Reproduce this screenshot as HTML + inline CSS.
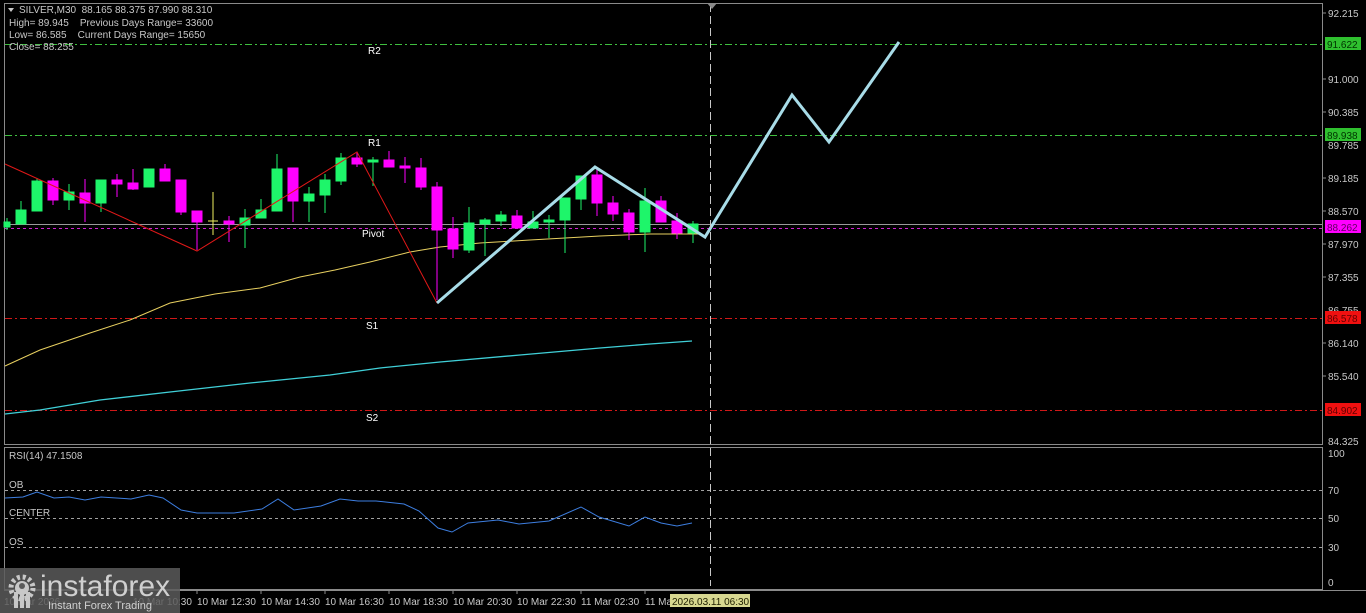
<!DOCTYPE html>
<html><head><meta charset="utf-8"><style>
html,body{margin:0;padding:0;background:#000;width:1366px;height:613px;overflow:hidden}
svg{display:block}
text{font-family:"Liberation Sans",sans-serif;font-size:10px}
</style></head><body>
<svg width="1366" height="613" viewBox="0 0 1366 613" xmlns="http://www.w3.org/2000/svg">
<rect width="1366" height="613" fill="#000"/>
<!-- frames -->
<rect x="4.5" y="3.5" width="1318" height="441" fill="none" stroke="#8a8a8a"/>
<rect x="4.5" y="447.5" width="1318" height="142" fill="none" stroke="#8a8a8a"/>
<line x1="4" y1="590.5" x2="1366" y2="590.5" stroke="#8a8a8a"/>
<!-- levels -->
<g stroke-width="1" fill="none">
<line x1="5" y1="44.5" x2="1322" y2="44.5" stroke="#3fbf3f" stroke-dasharray="7,3,2,3"/>
<line x1="5" y1="135.5" x2="1322" y2="135.5" stroke="#3fbf3f" stroke-dasharray="7,3,2,3"/>
<line x1="5" y1="224.5" x2="1322" y2="224.5" stroke="#9a9a9a"/>
<line x1="5" y1="228.5" x2="1322" y2="228.5" stroke="#d020d0" stroke-dasharray="3,3"/>
<line x1="5" y1="318.5" x2="1322" y2="318.5" stroke="#d01818" stroke-dasharray="7,3,2,3"/>
<line x1="5" y1="410.5" x2="1322" y2="410.5" stroke="#d01818" stroke-dasharray="7,3,2,3"/>
</g>
<g fill="#fff"><text x="368" y="54">R2</text><text x="368" y="146">R1</text><text x="362" y="237">Pivot</text><text x="366" y="329">S1</text><text x="366" y="421">S2</text></g>
<!-- MAs -->
<polyline fill="none" stroke="#e8d060" stroke-width="1" points="5,366 40,350 90,333 130,320 170,303 215,294 260,288 300,277 335,270 370,262 410,252 440,247 480,243 530,240 600,236 650,234 700,234"/>
<polyline fill="none" stroke="#40d0d8" stroke-width="1.3" points="5,414 40,410 100,400 170,392 250,383 330,375 380,368 440,362 520,355 600,348 650,344 692,341"/>
<!-- candles -->
<g id="c">
<g stroke="#1ef56a" fill="#1ef56a">
<line x1="7" y1="218" x2="7" y2="230"/><rect x="4" y="222" width="6" height="5"/>
<line x1="21" y1="201" x2="21" y2="224"/><rect x="16" y="210" width="10" height="14"/>
<line x1="37" y1="178" x2="37" y2="211"/><rect x="32" y="181" width="10" height="30"/>
<line x1="69" y1="184" x2="69" y2="210"/><rect x="64" y="192" width="10" height="8"/>
<line x1="101" y1="180" x2="101" y2="212"/><rect x="96" y="180" width="10" height="23"/>
<rect x="144" y="169" width="10" height="18"/>
<line x1="245" y1="209" x2="245" y2="248"/><rect x="240" y="218" width="10" height="7"/>
<line x1="261" y1="199" x2="261" y2="218"/><rect x="256" y="210" width="10" height="8"/>
<line x1="277" y1="154" x2="277" y2="211"/><rect x="272" y="169" width="10" height="42"/>
<line x1="309" y1="187" x2="309" y2="222"/><rect x="304" y="194" width="10" height="7"/>
<line x1="325" y1="174" x2="325" y2="213"/><rect x="320" y="180" width="10" height="15"/>
<line x1="341" y1="153" x2="341" y2="185"/><rect x="336" y="158" width="10" height="23"/>
<line x1="373" y1="157" x2="373" y2="186"/><rect x="368" y="160" width="10" height="2"/>
<line x1="469" y1="207" x2="469" y2="253"/><rect x="464" y="223" width="10" height="27"/>
<line x1="485" y1="218" x2="485" y2="256"/><rect x="480" y="220" width="10" height="4"/>
<line x1="501" y1="211" x2="501" y2="226"/><rect x="496" y="215" width="10" height="6"/>
<line x1="533" y1="211" x2="533" y2="228"/><rect x="528" y="222" width="10" height="6"/>
<line x1="549" y1="215" x2="549" y2="238"/><rect x="544" y="220" width="10" height="2"/>
<line x1="565" y1="198" x2="565" y2="253"/><rect x="560" y="198" width="10" height="22"/>
<line x1="581" y1="176" x2="581" y2="210"/><rect x="576" y="176" width="10" height="23"/>
<line x1="645" y1="188" x2="645" y2="252"/><rect x="640" y="201" width="10" height="31"/>
<line x1="693" y1="221" x2="693" y2="243"/><rect x="688" y="224" width="10" height="9"/>
</g>
<g stroke="#ff00ff" fill="#ff00ff">
<line x1="53" y1="178" x2="53" y2="205"/><rect x="48" y="181" width="10" height="19"/>
<line x1="85" y1="179" x2="85" y2="222"/><rect x="80" y="193" width="10" height="10"/>
<line x1="117" y1="174" x2="117" y2="197"/><rect x="112" y="180" width="10" height="4"/>
<line x1="133" y1="169" x2="133" y2="190"/><rect x="128" y="183" width="10" height="6"/>
<line x1="165" y1="164" x2="165" y2="181"/><rect x="160" y="169" width="10" height="12"/>
<line x1="181" y1="180" x2="181" y2="215"/><rect x="176" y="180" width="10" height="32"/>
<line x1="197" y1="211" x2="197" y2="250"/><rect x="192" y="211" width="10" height="11"/>
<line x1="229" y1="216" x2="229" y2="242"/><rect x="224" y="221" width="10" height="3"/>
<line x1="293" y1="168" x2="293" y2="222"/><rect x="288" y="168" width="10" height="33"/>
<line x1="357" y1="153" x2="357" y2="167"/><rect x="352" y="158" width="10" height="6"/>
<line x1="389" y1="151" x2="389" y2="167"/><rect x="384" y="160" width="10" height="7"/>
<line x1="405" y1="157" x2="405" y2="183"/><rect x="400" y="166" width="10" height="2"/>
<line x1="421" y1="158" x2="421" y2="190"/><rect x="416" y="168" width="10" height="19"/>
<line x1="437" y1="182" x2="437" y2="300"/><rect x="432" y="187" width="10" height="43"/>
<line x1="453" y1="217" x2="453" y2="258"/><rect x="448" y="229" width="10" height="20"/>
<line x1="517" y1="210" x2="517" y2="228"/><rect x="512" y="216" width="10" height="12"/>
<line x1="597" y1="168" x2="597" y2="216"/><rect x="592" y="175" width="10" height="28"/>
<line x1="613" y1="196" x2="613" y2="221"/><rect x="608" y="203" width="10" height="11"/>
<line x1="629" y1="209" x2="629" y2="240"/><rect x="624" y="213" width="10" height="19"/>
<line x1="661" y1="196" x2="661" y2="222"/><rect x="656" y="201" width="10" height="21"/>
<line x1="677" y1="213" x2="677" y2="239"/><rect x="672" y="221" width="10" height="12"/>
</g>
<g stroke="#f0f060"><line x1="213" y1="192" x2="213" y2="235"/><line x1="208" y1="221" x2="218" y2="221"/></g>
</g>
<!-- zigzags -->
<polyline fill="none" stroke="#e01818" stroke-width="1" points="5,164 197,251 357,152 437,303"/>
<polyline fill="none" stroke="#a8dce8" stroke-width="3" stroke-linejoin="miter" points="437,303 595,167 705,237 792,95 829,142 899,42"/>
<!-- vertical dashed -->
<line x1="710.5" y1="4" x2="710.5" y2="586" stroke="#c8c8c8" stroke-dasharray="8,4"/>
<polygon points="707,3 717,3 712,9" fill="#8a8a8a"/>
<!-- header text -->
<g fill="#c8c8c8">
<polygon points="8,8 14,8 11,12" fill="#c8c8c8"/>
<text x="19" y="13">SILVER,M30&#160; 88.165 88.375 87.990 88.310</text>
<text x="9" y="26">High= 89.945&#160;&#160;&#160; Previous Days Range= 33600</text>
<text x="9" y="38">Low= 86.585&#160;&#160;&#160; Current Days Range= 15650</text>
<text x="9" y="50">Close= 88.255</text>
</g>
<!-- price axis -->
<g fill="#c8c8c8">
<text x="1328" y="17">92.215</text>
<text x="1328" y="83">91.000</text>
<text x="1328" y="116">90.385</text>
<text x="1328" y="149">89.785</text>
<text x="1328" y="182">89.185</text>
<text x="1328" y="215">88.570</text>
<text x="1328" y="248">87.970</text>
<text x="1328" y="281">87.355</text>
<text x="1328" y="314">86.755</text>
<text x="1328" y="347">86.140</text>
<text x="1328" y="380">85.540</text>
<text x="1328" y="445">84.325</text>
</g>
<g stroke="#8a8a8a"><line x1="1323" y1="13" x2="1326" y2="13"/><line x1="1323" y1="79" x2="1326" y2="79"/><line x1="1323" y1="112" x2="1326" y2="112"/><line x1="1323" y1="178" x2="1326" y2="178"/><line x1="1323" y1="211" x2="1326" y2="211"/><line x1="1323" y1="244" x2="1326" y2="244"/><line x1="1323" y1="277" x2="1326" y2="277"/><line x1="1323" y1="343" x2="1326" y2="343"/><line x1="1323" y1="376" x2="1326" y2="376"/></g>
<rect x="1325" y="37" width="36" height="13" fill="#2fc02f"/><text x="1327" y="48" fill="#003300">91.622</text>
<rect x="1325" y="128" width="36" height="13" fill="#2fc02f"/><text x="1327" y="139" fill="#003300">89.938</text>
<rect x="1325" y="220" width="36" height="13" fill="#ff00ff"/><text x="1327" y="231" fill="#600060">88.262</text>
<rect x="1325" y="311" width="36" height="13" fill="#f01010"/><text x="1327" y="322" fill="#600000">86.578</text>
<rect x="1325" y="403" width="36" height="13" fill="#f01010"/><text x="1327" y="414" fill="#600000">84.902</text>
<!-- RSI -->
<text x="9" y="459" fill="#c8c8c8">RSI(14) 47.1508</text>
<g fill="#c8c8c8"><text x="9" y="488">OB</text><text x="9" y="516">CENTER</text><text x="9" y="545">OS</text>
<text x="1328" y="457">100</text><text x="1328" y="494">70</text><text x="1328" y="522">50</text><text x="1328" y="551">30</text><text x="1328" y="586">0</text></g>
<g stroke="#a0a0a0" stroke-dasharray="3,3"><line x1="5" y1="490.5" x2="1322" y2="490.5"/><line x1="5" y1="518.5" x2="1322" y2="518.5"/><line x1="5" y1="547.5" x2="1322" y2="547.5"/></g>
<polyline fill="none" stroke="#3d7ee0" stroke-width="1" points="5,498 23,497 37,492 54,498 69,497 85,500 101,497 131,499 149,495 163,498 181,510 197,513 234,513 262,509 278,499 294,510 321,506 340,499 358,501 376,501 404,504 419,511 438,528 452,532 468,523 498,520 519,524 549,521 581,507 599,517 629,526 645,517 661,523 677,526 692,523"/>
<!-- time axis -->
<g stroke="#8a8a8a"><line x1="197" y1="590" x2="197" y2="594"/><line x1="261" y1="590" x2="261" y2="594"/><line x1="325" y1="590" x2="325" y2="594"/><line x1="389" y1="590" x2="389" y2="594"/><line x1="453" y1="590" x2="453" y2="594"/><line x1="517" y1="590" x2="517" y2="594"/><line x1="581" y1="590" x2="581" y2="594"/><line x1="645" y1="590" x2="645" y2="594"/></g>
<g fill="#c8c8c8"><text x="4" y="605">10 Mar 2026</text><text x="133" y="605">10 Mar 10:30</text><text x="197" y="605">10 Mar 12:30</text><text x="261" y="605">10 Mar 14:30</text><text x="325" y="605">10 Mar 16:30</text><text x="389" y="605">10 Mar 18:30</text><text x="453" y="605">10 Mar 20:30</text><text x="517" y="605">10 Mar 22:30</text><text x="581" y="605">11 Mar 02:30</text><text x="645" y="605">11 Ma</text></g>
<rect x="670" y="594" width="80" height="13" fill="#d8d890"/><text x="672" y="605" fill="#202000">2026.03.11 06:30</text>
<!-- logo -->
<rect x="0" y="568" width="180" height="45" fill="#5a5a5a" opacity="0.85"/>
<g fill="#c8c8c8">
<circle cx="22" cy="588" r="11" fill="none" stroke="#c8c8c8" stroke-width="5" stroke-dasharray="3,2.8"/>
<circle cx="22" cy="588" r="7"/>
<rect x="14" y="592" width="4" height="16"/><rect x="26" y="592" width="4" height="16"/><rect x="20" y="586" width="4" height="22"/>
</g>
<circle cx="22" cy="586" r="3" fill="#5a5a5a"/>
<text x="40" y="596" fill="#d0d0d0" style="font-size:30px">instaforex</text>
<text x="48" y="609" fill="#d0d0d0" style="font-size:11px">Instant Forex Trading</text>
</svg>
</body></html>
